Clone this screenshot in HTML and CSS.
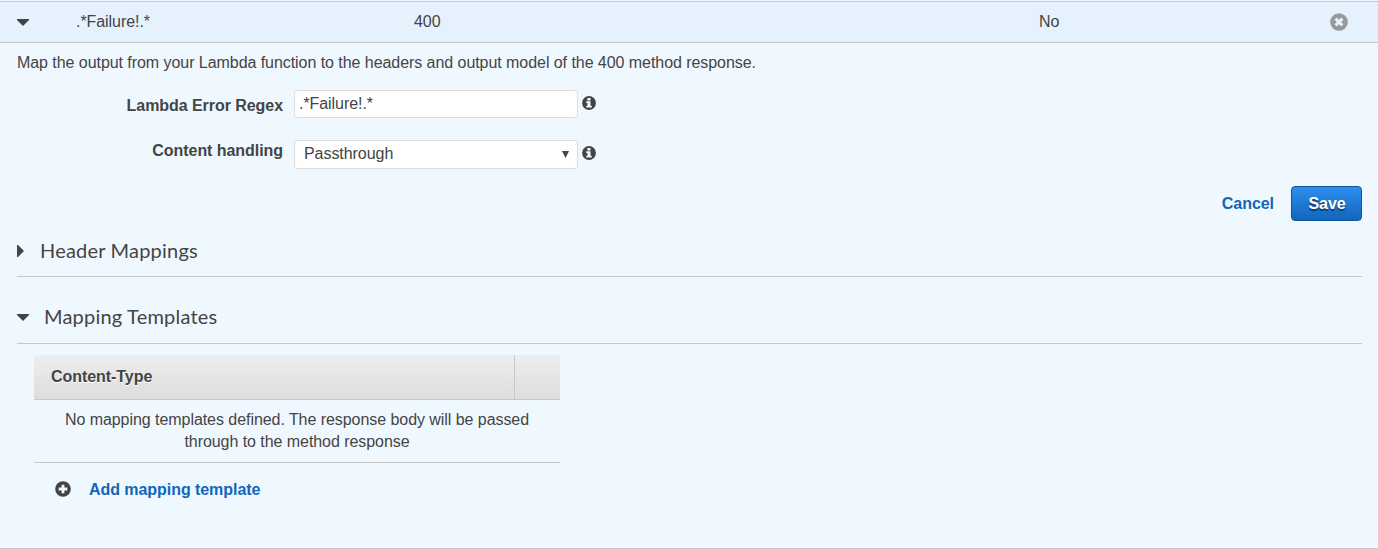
FILE: index.html
```html
<!DOCTYPE html>
<html lang="en">
<head>
<meta charset="utf-8">
<title>Integration Response</title>
<link rel="stylesheet" href="styles.css">
</head>
<body>
<main class="panel">
  <header class="response-row">
    <svg class="caret" width="12" height="7" viewBox="0 0 12 7"><path d="M0 0H12V1L6 7L0 1Z"/></svg>
    <span class="col-regex">.*Failure!.*</span>
    <span class="col-status">400</span>
    <span class="col-default">No</span>
    <svg class="remove" width="18" height="18" viewBox="0 0 18 18"><circle cx="9" cy="9" r="8.8"/><path d="M5.6 5.6L12.4 12.4M12.4 5.6L5.6 12.4"/></svg>
  </header>
  <section class="details">
    <p class="intro">Map the output from your Lambda function to the headers and output model of the 400 method response.</p>
    <div class="field field-regex">
      <label for="regex">Lambda Error Regex</label>
      <input id="regex" class="control" type="text" value=".*Failure!.*">
      <svg class="info" width="14" height="14" viewBox="0 0 14 14"><circle cx="7" cy="7" r="6.9"/><path d="M5.4 2H8.5V4.4H5.4ZM4.2 5.2H8.5V9.7H9.8V11.4H4.2V9.7H5.5V6.9H4.2Z"/></svg>
    </div>
    <div class="field field-handling">
      <span class="label">Content handling</span>
      <div class="control select" role="combobox"><span>Passthrough</span><svg width="7" height="7" viewBox="0 0 7 7"><path d="M0 0H7L3.5 7Z"/></svg></div>
      <svg class="info" width="14" height="14" viewBox="0 0 14 14"><circle cx="7" cy="7" r="6.9"/><path d="M5.4 2H8.5V4.4H5.4ZM4.2 5.2H8.5V9.7H9.8V11.4H4.2V9.7H5.5V6.9H4.2Z"/></svg>
    </div>
    <div class="actions">
      <a class="link">Cancel</a>
      <button class="save" type="button">Save</button>
    </div>
    <h2 class="section-title collapsed"><svg class="caret" width="7" height="12" viewBox="0 0 7 12"><path d="M0 0H1L7 6L1 12H0Z"/></svg><span>Header Mappings</span></h2>
    <h2 class="section-title expanded"><svg class="caret" width="12" height="7" viewBox="0 0 12 7"><path d="M0 0H12V1L6 7L0 1Z"/></svg><span>Mapping Templates</span></h2>
    <div class="templates">
      <div class="table-head"><span class="content-type">Content-Type</span><span class="tools"></span></div>
      <p class="empty">No mapping templates defined. The response body will be passed<br>through to the method response</p>
      <div class="add">
        <svg class="plus" width="16" height="16" viewBox="0 0 16 16"><circle cx="8" cy="8" r="7.8"/><path d="M8 3.7V12.3M3.7 8H12.3"/></svg>
        <a class="link">Add mapping template</a>
      </div>
    </div>
  </section>
</main>
</body>
</html>
```
FILE: styles.css
```css
* { box-sizing: border-box; }
body {
  margin: 0;
  background: #f0f8ff;
  color: #444;
  font: 16px/22px "Liberation Sans", Arial, sans-serif;
  letter-spacing: -0.055px;
}
svg { display: block; flex: none; }
p, h2 { margin: 0; }
.panel {
  height: 549px;
  padding-top: 1px;
  border-bottom: 1px solid #c8c8c8;
}
.response-row {
  display: flex;
  align-items: center;
  height: 42px;
  padding: 0 30px 0 17px;
  border: solid #c8c8c8;
  border-width: 1px 0;
  background: #e5f1fd;
}
.caret { fill: #444; }
.col-regex { width: 338px; margin-left: 47px; }
.col-status { width: 625px; }
.col-default { flex: 1; }
.remove { fill: #999; stroke: #e5f1fd; stroke-width: 3; }
.remove circle { stroke: none; }
.details { padding: 9px 16px 0 17px; }
.field { display: flex; }
.field-regex { margin-top: 16px; height: 28px; }
.field-handling { margin-top: 22px; height: 29px; }
.field label, .label {
  width: 266px;
  margin-right: 11px;
  font-weight: bold;
  text-align: right;
}
.field label { padding-top: 5px; }
.control {
  width: 284px;
  height: 100%;
  padding: 0 4px;
  border: 1px solid #ddd;
  border-radius: 3px;
  background: #fff;
  color: #444;
  font: inherit;
  letter-spacing: inherit;
}
.select {
  display: flex;
  align-items: center;
  justify-content: space-between;
  padding: 0 8px 2px 9px;
}
.select svg { margin-top: 1px; fill: #444; }
.info { margin: 6px 0 0 4px; fill: #444; }
.info path { fill: #f0f8ff; }
.actions {
  display: flex;
  align-items: center;
  justify-content: flex-end;
  gap: 17px;
  margin-top: 17px;
  height: 35px;
}
.link { color: #1166bb; font-weight: bold; }
.save {
  width: 71px;
  height: 35px;
  padding: 0 0 0 1px;
  border: 1px solid #0d559f;
  border-radius: 4px;
  background: linear-gradient(#2e8dee, #1166bb);
  color: #fff;
  font: inherit;
  font-weight: bold;
  letter-spacing: inherit;
  text-shadow: 0 2px 1px rgba(0, 0, 0, .5);
}
.section-title {
  display: flex;
  align-items: center;
  border-bottom: 1px solid #c8c8c8;
  font: 400 20px/24px Lato, sans-serif;
  letter-spacing: .2px;
}
.section-title span { padding-bottom: 2px; }
.collapsed { height: 56px; padding-bottom: 1px; gap: 16px; padding-top: 6px; }
.expanded { height: 67px; padding-top: 14px; gap: 15px; }
.templates { width: 526px; margin: 11px 0 0 17px; }
.table-head {
  display: flex;
  height: 45px;
  border-bottom: 1px solid #c8c8c8;
  background: linear-gradient(#eee, #ddd);
  font-weight: bold;
  line-height: 43px;
  text-shadow: 0 1px 0 #fff;
}
.content-type { flex: 1; padding-left: 17px; }
.tools { width: 46px; border-left: 1px solid #c8c8c8; }
.empty {
  height: 63px;
  padding-top: 9px;
  border-bottom: 1px solid #c8c8c8;
  text-align: center;
}
.add { display: flex; align-items: center; gap: 18px; padding: 16px 0 0 21px; }
.plus { margin-bottom: 2px; fill: #444; stroke: #f0f8ff; stroke-width: 2.8; }
.plus circle { stroke: none; }
```
